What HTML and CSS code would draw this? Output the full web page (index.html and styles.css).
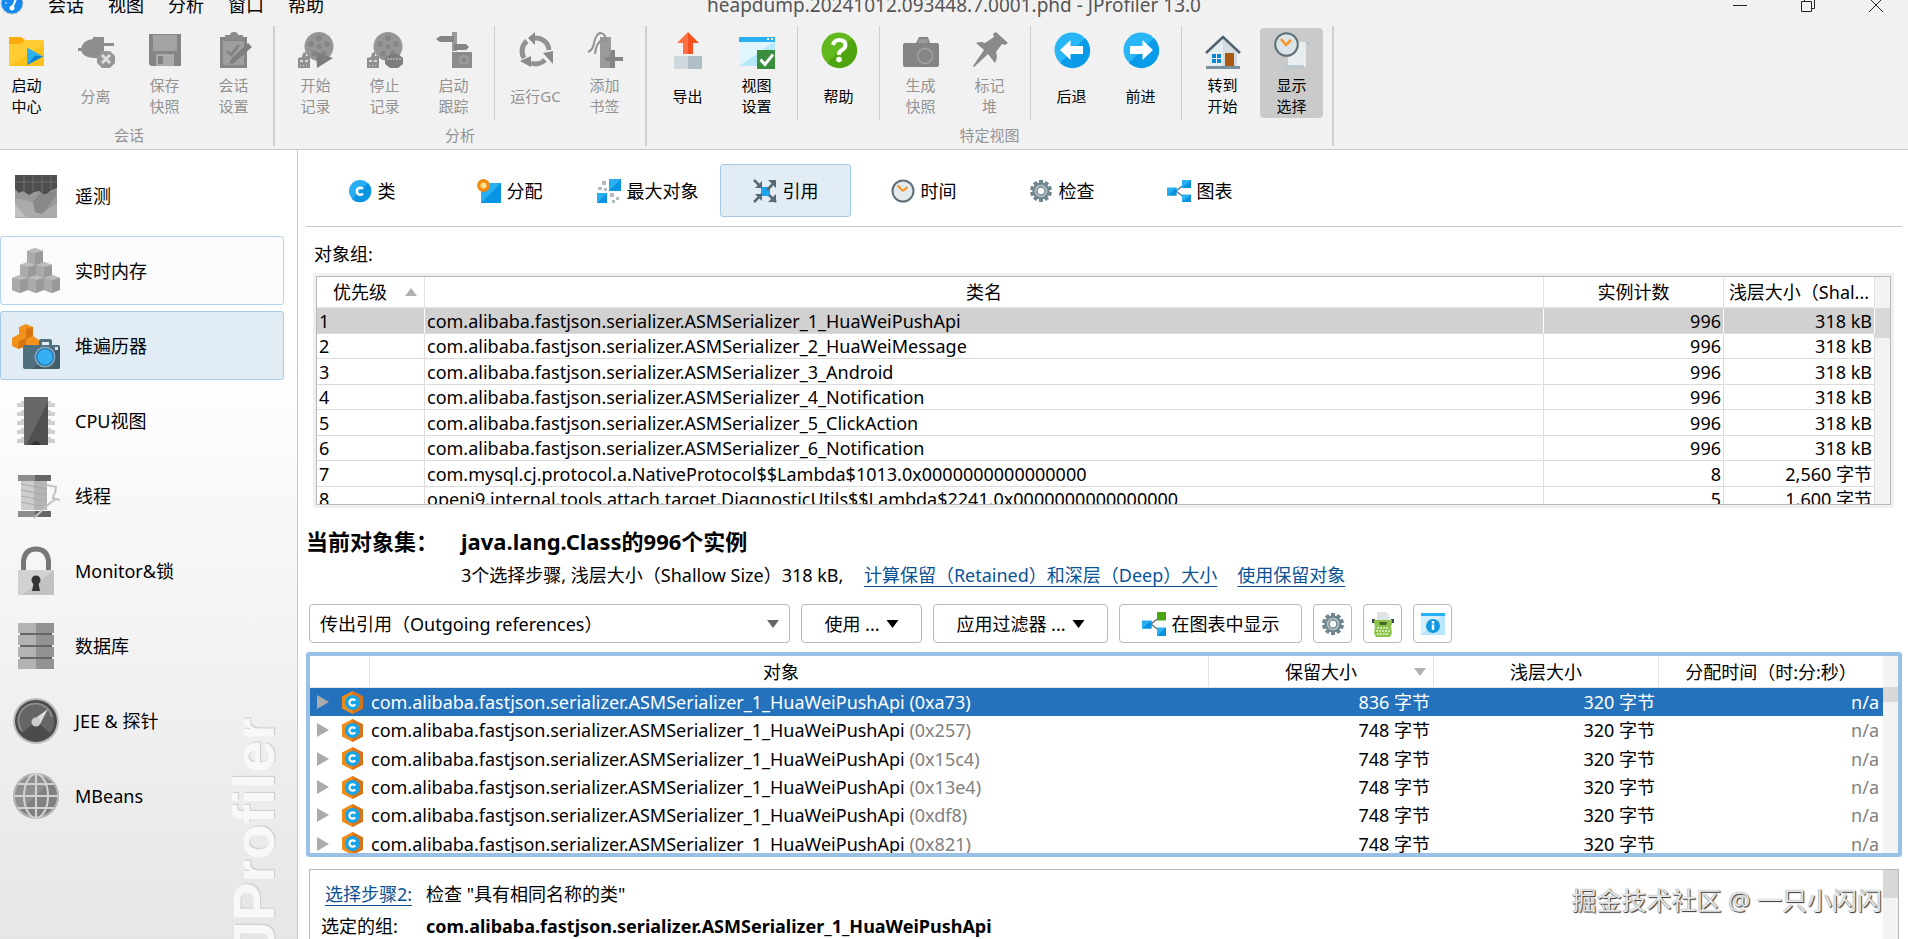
FILE: index.html
```html
<!DOCTYPE html>
<html lang="zh-CN">
<head>
<meta charset="utf-8">
<title>heapdump.20241012.093448.7.0001.phd - JProfiler 13.0</title>
<link rel="stylesheet" href="styles.css">
</head>
<body>
<svg class="sprite" aria-hidden="true">
  <symbol id="i-clock" viewBox="0 0 24 24"><circle cx="12" cy="12" r="10.5" fill="#e4eaec" stroke="#5f7078" stroke-width="2"/><path d="M12 12L6.500 6.500M12 12L16.500 8" stroke="#f7931e" stroke-width="2" fill="none"/></symbol>
  <symbol id="i-gear" viewBox="0 0 24 24"><g fill="#6f858f"><rect x="10" y="1" width="4" height="22"/><rect x="10" y="1" width="4" height="22" transform="rotate(36 12 12)"/><rect x="10" y="1" width="4" height="22" transform="rotate(72 12 12)"/><rect x="10" y="1" width="4" height="22" transform="rotate(108 12 12)"/><rect x="10" y="1" width="4" height="22" transform="rotate(144 12 12)"/><circle cx="12" cy="12" r="8.500"/></g><circle cx="12" cy="12" r="6.500" fill="#a9b9c0"/><circle cx="12" cy="12" r="3.800" fill="#fff" stroke="#6f858f" stroke-width="1.200"/></symbol>
  <symbol id="i-graph" viewBox="0 0 24 24"><path d="M18 5L9 12l9 7" fill="none" stroke="#66777f" stroke-width="1.500"/><path d="M0 8.500h9.500v8H0zM15 1h9v8h-9zM15 15.500h9v7.500h-9z" fill="#29b0f2"/><path d="M9.500 8.500v8H0zM24 1v8h-9zM24 15.500V23h-9z" fill="#0a92df"/></symbol>
  <symbol id="i-graphgreen" viewBox="0 0 24 24"><path d="M18 5L9 12l9 7" fill="none" stroke="#66777f" stroke-width="1.500"/><path d="M0 8.500h9.500v8H0zM15 15.500h9V24h-9z" fill="#29b0f2"/><path d="M9.500 8.500v8H0zM24 15.500V24h-9z" fill="#0a92df"/><path d="M15 0h9v8.500h-9z" fill="#4aa512"/></symbol>
  <symbol id="i-class" viewBox="0 0 21 23"><path d="M10.500 0L21 5.500v12L10.500 23 0 17.500v-12z" fill="#f28a16"/><path d="M10.500 0L21 5.500v12L10.500 23z" fill="#d9731a"/><circle cx="10.500" cy="11.500" r="7.600" fill="#16a4e8"/><path d="M13.200 9.600a3.200 3.200 0 1 0 0 3.800" fill="none" stroke="#fff" stroke-width="2.200"/></symbol>
  <symbol id="i-reel" viewBox="0 0 36 36"><circle cx="21" cy="14.500" r="14.500" fill="#969696"/><g fill="#868686"><circle cx="21" cy="6" r="3"/><circle cx="29" cy="12" r="3"/><circle cx="26" cy="21.500" r="3"/><circle cx="16" cy="21.500" r="3"/><circle cx="13" cy="12" r="3"/><circle cx="21" cy="14.500" r="2.500"/></g><path d="M0 26l4-1 1-4 3-1v4h4v12H0z" fill="#909090"/><path d="M2 28h3v2H2zM7 28h3v2H7zM2 33h1v1H2zM5 33h1v1H5zM8 33h1v1H8z" fill="#d8d8d8"/></symbol>
</svg>

<div class="app">
  <header class="titlebar">
    <svg class="logo" viewBox="0 0 24 24"><circle cx="12" cy="12" r="11" fill="#1689ee" stroke="#b9c6cf"/><path d="M12 17L17 6" stroke="#fff" stroke-width="2"/><circle cx="12" cy="17" r="2.500" fill="#fff"/><path d="M5 12h2M7 7l1 1M12 4v2" stroke="#fff"/></svg>
    <nav class="menus">
      <button class="menu">会话</button><button class="menu">视图</button><button class="menu">分析</button><button class="menu">窗口</button><button class="menu">帮助</button>
    </nav>
    <h1 class="doc-title">heapdump.20241012.093448.7.0001.phd - JProfiler 13.0</h1>
    <div class="wincontrols">
      <button class="wc" aria-label="最小化"><svg viewBox="0 0 16 16"><path d="M1 8.500h14"/></svg></button>
      <button class="wc" aria-label="还原"><svg viewBox="0 0 16 16"><path d="M1.500 4.500h10v10h-10zM4.500 4V1.500h10v10H12"/></svg></button>
      <button class="wc" aria-label="关闭"><svg viewBox="0 0 16 16"><path d="M1 1l14 14M15 1L1 15"/></svg></button>
    </div>
  </header>

  <div class="toolbar">
    <section class="group group-first">
      <div class="subs"><div class="sub">
        <button class="tool"><svg viewBox="0 0 36 36"><path d="M0 6q0-1 1-1h11l4 3h18q1 0 1 1v25H0z" fill="#ffcd33"/><path d="M0 6q0-1 1-1h11l4 3-4 4H0z" fill="#ffad0c"/><path d="M35 12v22H0z" fill="#fbc21d"/><path d="M18 15.500L34 24.500 18 33z" fill="#2cb1f0"/><path d="M18 33l16-8.500-8-1z" fill="#0b84cf"/></svg><span>启动<br>中心</span></button>
        <button class="tool" disabled><svg viewBox="0 0 36 36"><path d="M0 16h3q2-8 12-9V5h11v6h10v3H26v13l-10-1q-10 0-13-7H0z" fill="#8d8d8d"/><path d="M24 19h8l5 5v7l-5 5h-8l-5-5v-7z" fill="#969696"/><path d="M24 23l8 8M32 23l-8 8" stroke="#ddd" stroke-width="3"/></svg><span>分离</span></button>
        <button class="tool" disabled><svg viewBox="0 0 36 36"><path d="M2 2h32v32H4l-2-2z" fill="#858585"/><path d="M6 3h24v16H6z" fill="#a3a3a3"/><path d="M9 22h18v12H9z" fill="#ababab"/><path d="M11 24h5v8h-5z" fill="#828282"/></svg><span>保存<br>快照</span></button>
        <button class="tool" disabled><svg viewBox="0 0 36 36"><path d="M4 5h27v31H4z" fill="#858585"/><path d="M7 9h21v24H7z" fill="#9f9f9f"/><path d="M9 3h5q0-3 4-3t4 3h5v5H9z" fill="#8b8b8b"/><path d="M11 19l4 4 8-10" stroke="#858585" stroke-width="3" fill="none"/><path d="M32 11l4 4-18 16-5 1 2-5z" fill="#808080"/></svg><span>会话<br>设置</span></button>
      </div></div>
      <h2 class="group-title">会话</h2>
    </section>
    <section class="group">
      <div class="subs">
        <div class="sub">
          <button class="tool" disabled><svg viewBox="0 0 36 36"><use href="#i-reel"/><path d="M18 20l17 6-16 10z" fill="#7d7d7d"/></svg><span>开始<br>记录</span></button>
          <button class="tool" disabled><svg viewBox="0 0 36 36"><use href="#i-reel"/><path d="M23 22h8l5 4v6l-5 4h-8l-5-4v-6z" fill="#7d7d7d"/><path d="M20 27h14" stroke="#aaa" stroke-width="2" stroke-dasharray="2 1"/></svg><span>停止<br>记录</span></button>
          <button class="tool" disabled><svg viewBox="0 0 36 36"><path d="M16 0h5v19h-5z" fill="#9a9a9a"/><path d="M4 4h14v6H4L0 7zM18 12h12l3 3-3 3H18z" fill="#858585"/><path d="M16 20h20v16H16z" fill="#8b8b8b"/><circle cx="28" cy="28" r="4" fill="none" stroke="#9f9f9f" stroke-width="2"/></svg><span>启动<br>跟踪</span></button>
        </div>
        <div class="sub">
          <button class="tool" disabled><svg viewBox="0 0 36 36"><g fill="none" stroke="#929292" stroke-width="5"><path d="M15 6.500A13 13 0 0 1 31 18"/><path d="M27 28A13 13 0 0 1 13 31"/><path d="M6 26A13 13 0 0 1 9 9"/></g><path d="M17 0v13L10 6zM25 21l10-2v13zM2 29l11-5v11z" fill="#8a8a8a"/></svg><span>运行GC</span></button>
          <button class="tool" disabled><svg viewBox="0 0 36 36"><path d="M13 5h11v31H13z" fill="#9a9a9a"/><path d="M24 18h4v7h8v4h-8v7h-5v-7h-5v-4h5z" fill="#858585"/><path d="M19 10q0-9-6-9Q9 2 7 11q-1 7-6 9M15 8q-6 3-7 14" fill="none" stroke="#929292" stroke-width="2"/></svg><span>添加<br>书签</span></button>
        </div>
      </div>
      <h2 class="group-title">分析</h2>
    </section>
    <section class="group">
      <div class="subs">
        <div class="sub">
          <button class="tool"><svg viewBox="0 0 36 36"><path d="M18 0L7 11h6v11h5z" fill="#ff7043"/><path d="M18 0l11 11h-6v11h-5z" fill="#f4511e"/><path d="M4 24h14v13H4z" fill="#cfd8dc"/><path d="M18 24h14v13H18z" fill="#b0bec5"/></svg><span>导出</span></button>
          <button class="tool"><svg viewBox="0 0 36 36"><path d="M0 5h36v29H0z" fill="#b6e8fb"/><path d="M0 9h36L0 34z" fill="#e1f5fe"/><path d="M0 5h36v5H0z" fill="#29b0f2"/><path d="M28 7h2M32 7h2" stroke="#fff" stroke-width="2"/><path d="M18 18h18v19H18z" fill="#388e3c"/><path d="M21.500 27.500l4.500 5 8-10" fill="none" stroke="#fff" stroke-width="3"/></svg><span>视图<br>设置</span></button>
        </div>
        <div class="sub">
          <button class="tool"><svg viewBox="0 0 36 36"><circle cx="18" cy="18" r="17.500" fill="#62b91d"/><path d="M31 6A17.500 17.500 0 0 1 6 31z" fill="#4fa50f"/><path d="M12 13q1-5 6.500-5t6 5q0 3-3.500 5t-3 5" fill="none" stroke="#fff" stroke-width="4"/><circle cx="18" cy="27.500" r="2.800" fill="#fff"/></svg><span>帮助</span></button>
        </div>
        <div class="sub">
          <button class="tool" disabled><svg viewBox="0 0 36 36"><path d="M2 11h11l3-6h9l2 6h7q2 0 2 2v20q0 2-2 2H2q-2 0-2-2V13q0-2 2-2z" fill="#858585"/><path d="M16 7h8l1 4H15z" fill="#9a9a9a"/><circle cx="22" cy="24" r="8.500" fill="#9c9c9c"/><circle cx="22" cy="24" r="6.500" fill="#868686"/></svg><span>生成<br>快照</span></button>
          <button class="tool" disabled><svg viewBox="0 0 36 36"><path d="M24 0l12 11-3 2-3-1-6 8q2 6-1 11l-7-9L2 35l-1-1 11-16-8-7q5-2 9 0l9-6-1-3z" fill="#8a8a8a"/></svg><span>标记<br>堆</span></button>
        </div>
        <div class="sub">
          <button class="tool"><svg viewBox="0 0 36 36"><circle cx="18" cy="18" r="17.500" fill="#29b6f6"/><path d="M31 6A17.500 17.500 0 0 1 6 31z" fill="#0a9be8"/><path d="M6 18L16.500 8v6H29v8H16.500v6z" fill="#fff"/></svg><span>后退</span></button>
          <button class="tool"><svg viewBox="0 0 36 36"><circle cx="18" cy="18" r="17.500" fill="#29b6f6"/><path d="M31 6A17.500 17.500 0 0 1 6 31z" fill="#0a9be8"/><path d="M30 18L19.500 8v6H7v8h12.500v6z" fill="#fff"/></svg><span>前进</span></button>
        </div>
        <div class="sub">
          <button class="tool"><svg viewBox="0 0 36 36"><path d="M4 20L18 7l14 13v14H4z" fill="#e6edf0"/><path d="M18 7l14 13v14H18z" fill="#d3dde1"/><path d="M1 34h34v3H1z" fill="#78909c"/><path d="M1 21L18 5l17 16" fill="none" stroke="#51646e" stroke-width="2.500"/><path d="M7 22h4v4H7zM12 22h4v4h-4zM7 27h4v4H7zM12 27h4v4h-4z" fill="#0a86d2"/><path d="M20 21h9v13h-9z" fill="#a85a12"/></svg><span>转到<br>开始</span></button>
          <button class="tool tool-on" aria-pressed="true"><svg viewBox="0 0 36 36"><path d="M14 10h18v26l-4-2H14z" fill="#e8eef0"/><path d="M32 10h4v2h-4z" fill="#b4c0c5"/><path d="M9 33h20l3 4H10z" fill="#bcc8cd"/><circle cx="12.500" cy="12.500" r="11.300" fill="#dce4e7" stroke="#5f7078" stroke-width="2"/><path d="M7 7l5 6 5-5" fill="none" stroke="#f7931e" stroke-width="2.500"/></svg><span>显示<br>选择</span></button>
        </div>
      </div>
      <h2 class="group-title">特定视图</h2>
    </section>
  </div>

  <div class="body">
    <nav class="sidebar">
      <a class="side" href="#"><svg viewBox="0 0 48 48"><path d="M3 3h42v43H3z" fill="#999"/><path d="M3 26l18 4 14 8 10-7v15H3z" fill="#aaa"/><path d="M3 3h42v13l-7 3-5 5-6-5-5 1-5 3-6-4-4 2-4-4z" fill="#4e4e4e"/><path d="M3 10h42M12 3v16M21 3v16M30 3v18M39 3v15" stroke="#6e6e6e"/><path d="M21 29l7-7 6 0 10-4v6l-6 6-2 6-6 6-7-2z" fill="#888"/><path d="M3 32l11 13H3z" fill="#c2c2c2"/></svg>遥测</a>
      <a class="side side-hover" href="#"><svg viewBox="0 0 48 48"><defs><g id="cube"><path d="M0 3l8-3 8 3v12l-8 3-8-3z" fill="#999"/><path d="M0 3l8 2v13l-8-3z" fill="#aaa"/><path d="M0 3l8-3 8 3-8 2z" fill="#bcbcbc"/></g></defs><use href="#cube" x="15" y="1"/><use href="#cube" x="8" y="15"/><use href="#cube" x="24" y="15"/><use href="#cube" x="0" y="28"/><use href="#cube" x="16" y="28"/><use href="#cube" x="32" y="28"/></svg>实时内存</a>
      <a class="side side-on" href="#"><svg viewBox="0 0 48 48"><path d="M7 5l7-3 7 3v9l6 4v6l-7 3-6-3-8 3-6-3v-8l7-4z" fill="#f2921d"/><path d="M14 7l7-2v9l-7 3zM7 19l7-3v8l-8 3z" fill="#d9730e"/><path d="M13 23h14v-4q0-2 2-2h9q2 0 2 2v4h6q2 0 2 2v20q0 2-2 2H13q-2 0-2-2V25q0-2 2-2z" fill="#50707f"/><path d="M48 25v20q0 2-2 2H20z" fill="#415d6b"/><path d="M30 20h7v3h-7z" fill="#e3edf5"/><path d="M43 25h3v3h-3z" fill="#dbe7ee"/><circle cx="33" cy="35" r="10.500" fill="#8aa5b1"/><circle cx="33" cy="35" r="9" fill="#1f7fc0"/><circle cx="33" cy="35" r="7.500" fill="#35b0f3"/></svg>堆遍历器</a>
      <a class="side" href="#"><svg viewBox="0 0 48 48"><path d="M5 6h4v-2h30v2h4v4H5zM5 15h4v-2h30v2h4v4H5zM5 24h4v-2h30v2h4v4H5zM5 33h4v-2h30v2h4v4H5zM5 42h4v-2h30v2h4v4H5z" fill="#cfcfcf"/><path d="M12 0h24v48H12z" fill="#505050"/><path d="M12 0h24v5L14 48h-2z" fill="#686868"/><path d="M19 48q5-8 10 0z" fill="#333"/></svg>CPU视图</a>
      <a class="side" href="#"><svg viewBox="0 0 48 48"><path d="M9 8h26v30H9z" fill="#cdcdcd"/><path d="M22 8h13v30H22z" fill="#b5b5b5"/><path d="M9 12l26 5M9 18l26 5M9 24l26 5M9 30l20 4" stroke="#a9a9a9"/><path d="M6 3h17v6H6zM6 39h17v6H6z" fill="#8d8d8d"/><path d="M23 3h16v6H23zM23 39h16v6H23z" fill="#666"/><path d="M35 13l9 2-1 6q-4 5 1 6l-6 4L22 46M40 26l8 2" fill="none" stroke="#c2c2c2" stroke-width="2"/></svg>线程</a>
      <a class="side" href="#"><svg viewBox="0 0 48 48"><path d="M11.500 24V14Q13 2 24 2t12.500 12v10" fill="none" stroke="#777" stroke-width="5"/><path d="M6 23h36v25H6z" fill="#d2d2d2"/><path d="M42 23v25H10z" fill="#c2c2c2"/><circle cx="24" cy="33" r="4.500" fill="#333"/><path d="M22 34h4l2 10h-8z" fill="#333"/></svg>Monitor&amp;锁</a>
      <a class="side" href="#"><svg viewBox="0 0 48 48"><path d="M8 4h32v40H8z" fill="#666"/><path d="M6 1h18v10H6zM6 13h18v10H6zM6 25h18v10H6zM6 37h18v10H6z" fill="#b3b3b3"/><path d="M24 1h18v10H24zM24 13h18v10H24zM24 25h18v10H24zM24 37h18v10H24z" fill="#929292"/></svg>数据库</a>
      <a class="side" href="#"><svg viewBox="0 0 48 48"><circle cx="24" cy="24" r="22" fill="#4b4b4b" stroke="#bcbcbc" stroke-width="2"/><path d="M10 36A18 18 0 1 1 38 36L24 24z" fill="#666"/><path d="M10 34A17 17 0 1 1 40 20" fill="none" stroke="#8b8b8b" stroke-width="2"/><path d="M21 23L36 12 28 27z" fill="#ddd"/><circle cx="24" cy="25" r="4.500" fill="#ccc"/></svg>JEE &amp; 探针</a>
      <a class="side" href="#"><svg viewBox="0 0 48 48"><circle cx="24" cy="24" r="22" fill="#808080"/><path d="M8 39L40 8A22 22 0 0 0 8 39z" fill="#8f8f8f"/><g fill="none" stroke="#d2d2d2" stroke-width="2"><circle cx="24" cy="24" r="22" stroke="#b3b3b3"/><ellipse cx="24" cy="24" rx="12" ry="22"/><path d="M24 2v44M2 24h44M6 12h36M6 36h36"/></g></svg>MBeans</a>
      <div class="brand" aria-hidden="true">JProfiler</div>
    </nav>

    <main class="main">
      <nav class="tabs">
        <button class="tab"><svg viewBox="0 0 24 24"><circle cx="12" cy="12" r="11" fill="#27aef2"/><path d="M20 4A11 11 0 0 1 4 20z" fill="#0994e2"/><path d="M15 10a3.500 3.500 0 1 0 0 4.500" fill="none" stroke="#fff" stroke-width="2.500"/></svg>类</button>
        <button class="tab"><svg viewBox="0 0 24 24"><path d="M4 4h20v20H4z" fill="#29aef1"/><path d="M24 4v20H4z" fill="#0795e3"/><circle cx="6.500" cy="6.500" r="6.500" fill="#f28a13"/><circle cx="6.500" cy="6.500" r="3" fill="#ffdf91"/></svg>分配</button>
        <button class="tab"><svg viewBox="0 0 24 24"><path d="M12 0h12v12H12zM0 14h10v10H0z" fill="#29aef1"/><path d="M24 0v12H12zM10 14v10H0z" fill="#0795e3"/><path d="M5 2h4v4H5zM1 8h4v3H1zM7 9h3v3H7zM13 14h4v4h-4zM19 18h3v3h-3zM15 21h3v3h-3z" fill="#b0bcc1"/></svg>最大对象</button>
        <button class="tab tab-on" aria-pressed="true"><svg viewBox="0 0 24 24"><path d="M8 8h9v9H8z" fill="#1fa3ec"/><path d="M1 1l6 6M14 11l8-8M23 23l-7-7M1 23l8-8" stroke="#566b76" stroke-width="2.500"/><path d="M9 2v7H2zM15 1h8v8zM15 23h8v-8zM2 15h7v7z" fill="#566b76"/></svg>引用</button>
        <button class="tab"><svg viewBox="0 0 24 24"><use href="#i-clock"/></svg>时间</button>
        <button class="tab"><svg viewBox="0 0 24 24"><use href="#i-gear"/></svg>检查</button>
        <button class="tab"><svg viewBox="0 0 24 24"><use href="#i-graph"/></svg>图表</button>
      </nav>

      <h2 class="label">对象组:</h2>
      <div class="pane pane-groups">
        <div class="scroll">
          <table class="grid">
            <colgroup><col class="c-rank"><col><col class="c-count"><col class="c-size"></colgroup>
            <thead><tr><th><span class="sorted">优先级 <svg class="tri" viewBox="0 0 12 8"><path d="M0 8L6 0l6 8z"/></svg></span></th><th>类名</th><th>实例计数</th><th>浅层大小（Shal...</th></tr></thead>
            <tbody>
              <tr class="sel"><td>1</td><td>com.alibaba.fastjson.serializer.ASMSerializer_1_HuaWeiPushApi</td><td>996</td><td>318 kB</td></tr>
              <tr><td>2</td><td>com.alibaba.fastjson.serializer.ASMSerializer_2_HuaWeiMessage</td><td>996</td><td>318 kB</td></tr>
              <tr><td>3</td><td>com.alibaba.fastjson.serializer.ASMSerializer_3_Android</td><td>996</td><td>318 kB</td></tr>
              <tr><td>4</td><td>com.alibaba.fastjson.serializer.ASMSerializer_4_Notification</td><td>996</td><td>318 kB</td></tr>
              <tr><td>5</td><td>com.alibaba.fastjson.serializer.ASMSerializer_5_ClickAction</td><td>996</td><td>318 kB</td></tr>
              <tr><td>6</td><td>com.alibaba.fastjson.serializer.ASMSerializer_6_Notification</td><td>996</td><td>318 kB</td></tr>
              <tr><td>7</td><td>com.mysql.cj.protocol.a.NativeProtocol$$Lambda$1013.0x0000000000000000</td><td>8</td><td>2,560 字节</td></tr>
              <tr><td>8</td><td>openj9.internal.tools.attach.target.DiagnosticUtils$$Lambda$2241.0x0000000000000000</td><td>5</td><td>1,600 字节</td></tr>
            </tbody>
          </table>
        </div>
        <div class="bar"><div class="thumb"></div></div>
      </div>

      <div class="current">
        <h2>当前对象集：</h2>
        <h2>java.lang.Class的996个实例</h2>
        <p>3个选择步骤, 浅层大小（Shallow Size）318 kB, <a class="link link-calc" href="#">计算保留（Retained）和深层（Deep）大小</a><a class="link" href="#">使用保留对象</a></p>
      </div>

      <div class="actions">
        <div class="picker">
          <select aria-label="引用类型"><option>传出引用（Outgoing references）</option></select>
          <svg class="tri" viewBox="0 0 12 8"><path d="M0 0h12L6 8z"/></svg>
        </div>
        <button class="btn btn-use">使用 ... <svg class="tri" viewBox="0 0 12 8"><path d="M0 0h12L6 8z"/></svg></button>
        <button class="btn btn-filter">应用过滤器 ... <svg class="tri" viewBox="0 0 12 8"><path d="M0 0h12L6 8z"/></svg></button>
        <button class="btn btn-graph"><svg class="ic" viewBox="0 0 24 24"><use href="#i-graphgreen"/></svg>在图表中显示</button>
        <button class="btn btn-icon" aria-label="设置"><svg class="ic" viewBox="0 0 24 24"><use href="#i-gear"/></svg></button>
        <button class="btn btn-icon" aria-label="脚本"><svg class="ic" viewBox="0 0 24 24"><path d="M6 0h9l3 3v7H6z" fill="#dde3e6"/><path d="M1 7h3v4H1zM20 7h3v4h-3z" fill="#37474f"/><path d="M3 8h18v4l-1 2 1 7-2 4H5l-2-4 1-7-1-2z" fill="#8bc34a"/><path d="M8 10h8l-1 3H9z" fill="#43632a"/><path d="M6 16h12M5 19h14M6 22h12" stroke="#e6f3d4" stroke-width="1.500" stroke-dasharray="2 1"/></svg></button>
        <button class="btn btn-icon" aria-label="信息"><svg class="ic" viewBox="0 0 24 24"><path d="M0 1h24v22H0z" fill="#b9e6fa"/><path d="M0 1h24L0 23z" fill="#d5f0fc"/><path d="M0 1h24v3H0z" fill="#29b0f2"/><circle cx="12" cy="14" r="7" fill="#1399e2"/><path d="M12 9v2.500M12 12.500V18" stroke="#fff" stroke-width="2.500"/></svg></button>
      </div>

      <div class="pane pane-objects">
        <div class="scroll">
          <table class="tree">
            <colgroup><col class="c-node"><col><col class="c-ret"><col class="c-ret"><col class="c-time"></colgroup>
            <thead><tr><th></th><th class="th-object">对象</th><th><span class="sorted">保留大小 <svg class="tri" viewBox="0 0 12 8"><path d="M0 0h12L6 8z"/></svg></span></th><th>浅层大小</th><th>分配时间（时:分:秒）</th></tr></thead>
            <tbody>
              <tr class="sel"><td><div class="node"><svg class="exp" viewBox="0 0 12 14"><path d="M0 0l12 7-12 7z"/></svg><svg class="cls" viewBox="0 0 21 23"><use href="#i-class"/></svg></div></td><td>com.alibaba.fastjson.serializer.ASMSerializer_1_HuaWeiPushApi <span>(0xa73)</span></td><td>836 字节</td><td>320 字节</td><td>n/a</td></tr>
              <tr><td><div class="node"><svg class="exp" viewBox="0 0 12 14"><path d="M0 0l12 7-12 7z"/></svg><svg class="cls" viewBox="0 0 21 23"><use href="#i-class"/></svg></div></td><td>com.alibaba.fastjson.serializer.ASMSerializer_1_HuaWeiPushApi <span>(0x257)</span></td><td>748 字节</td><td>320 字节</td><td>n/a</td></tr>
              <tr><td><div class="node"><svg class="exp" viewBox="0 0 12 14"><path d="M0 0l12 7-12 7z"/></svg><svg class="cls" viewBox="0 0 21 23"><use href="#i-class"/></svg></div></td><td>com.alibaba.fastjson.serializer.ASMSerializer_1_HuaWeiPushApi <span>(0x15c4)</span></td><td>748 字节</td><td>320 字节</td><td>n/a</td></tr>
              <tr><td><div class="node"><svg class="exp" viewBox="0 0 12 14"><path d="M0 0l12 7-12 7z"/></svg><svg class="cls" viewBox="0 0 21 23"><use href="#i-class"/></svg></div></td><td>com.alibaba.fastjson.serializer.ASMSerializer_1_HuaWeiPushApi <span>(0x13e4)</span></td><td>748 字节</td><td>320 字节</td><td>n/a</td></tr>
              <tr><td><div class="node"><svg class="exp" viewBox="0 0 12 14"><path d="M0 0l12 7-12 7z"/></svg><svg class="cls" viewBox="0 0 21 23"><use href="#i-class"/></svg></div></td><td>com.alibaba.fastjson.serializer.ASMSerializer_1_HuaWeiPushApi <span>(0xdf8)</span></td><td>748 字节</td><td>320 字节</td><td>n/a</td></tr>
              <tr><td><div class="node"><svg class="exp" viewBox="0 0 12 14"><path d="M0 0l12 7-12 7z"/></svg><svg class="cls" viewBox="0 0 21 23"><use href="#i-class"/></svg></div></td><td>com.alibaba.fastjson.serializer.ASMSerializer_1_HuaWeiPushApi <span>(0x821)</span></td><td>748 字节</td><td>320 字节</td><td>n/a</td></tr>
            </tbody>
          </table>
        </div>
        <div class="bar"><div class="thumb"></div></div>
      </div>

      <div class="pane pane-steps">
        <dl class="scroll steps">
          <dt class="step"><a class="link" href="#">选择步骤2:</a></dt><dd>检查 "具有相同名称的类"</dd>
          <dt>选定的组:</dt><dd><b>com.alibaba.fastjson.serializer.ASMSerializer_1_HuaWeiPushApi</b></dd>
        </dl>
        <div class="bar"><div class="thumb"></div></div>
      </div>
      <div class="watermark">掘金技术社区 @ 一只小闪闪</div>
    </main>
  </div>
</div>
</body>
</html>
```
FILE: styles.css
```css
* { box-sizing: border-box; }
body {
  margin: 0;
  background: #f1f1f1;
  color: #000;
  font: 18px/24px "Noto Sans", "Noto Sans CJK SC", sans-serif;
  overflow: hidden;
}
h1, h2, p, dl, dd { margin: 0; font-size: inherit; font-weight: inherit; }
button { border: 0; padding: 0; background: none; color: inherit; font: inherit; }
svg { display: block; flex: none; overflow: visible; }
.sprite { position: absolute; width: 0; height: 0; }
.app { display: flex; flex-direction: column; height: 100vh; }

/* Title bar */
.titlebar { display: grid; grid-template: 10px / 1fr auto 1fr; align-items: center; height: 10px; position: relative; }
.logo { position: absolute; left: 0; top: -9px; width: 24px; height: 24px; }
.menus { display: flex; gap: 24px; padding-left: 48px; }
.doc-title { color: #555; font-size: 19px; white-space: nowrap; }
.wincontrols { display: flex; justify-content: flex-end; gap: 52px; padding-right: 24px; }
.wc svg { width: 16px; height: 16px; fill: none; stroke: #222; }

/* Toolbar */
.toolbar { display: flex; padding-top: 16px; height: 140px; border-bottom: 1px solid #c8c8c8; font-size: 15px; line-height: 21px; }
.group { border-right: 2px solid #cfcfcf; height: 120px; }
.group-first { margin-left: -8px; }
.group-first .sub { padding-left: 0; padding-right: 5px; }
.group-first .group-title { padding-right: 7px; }
.subs { display: flex; height: 94px; }
.sub { display: flex; padding: 0 6px; border-right: 1px solid #cfcfcf; }
.sub:last-child { border-right: 0; }
.tool { display: flex; flex-direction: column; align-items: center; width: 63px; height: 90px; margin: 2px 3px; padding-top: 4px; border-radius: 4px; }
.tool svg { width: 36px; height: 36px; }
.tool span { display: grid; place-content: center; height: 42px; margin-top: 7px; white-space: nowrap; }
.tool:disabled { color: #939393; }
.tool-on { background: #cacaca; }
.group-title { text-align: center; color: #939393; line-height: 30px; }

/* Sidebar */
.body { display: flex; flex: 1; min-height: 0; }
.sidebar { position: relative; width: 298px; flex: none; display: flex; flex-direction: column; gap: 6px; padding: 11px 13px 0 0; overflow: hidden; border-right: 1px solid #c8c8c8; background: linear-gradient(#fff 25%, #e6e6e6); }
.side { display: flex; flex: none; align-items: center; gap: 15px; height: 69px; padding-left: 11px; border: 1px solid transparent; border-radius: 3px; color: #000; text-decoration: none; }
.side svg { width: 48px; height: 48px; }
.side-hover { background: #f9fbfd; border-color: #b5d3ea; }
.side-on { background: #e2ecf5; border-color: #a5cae6; }
.brand { position: absolute; right: 10px; top: 568px; writing-mode: vertical-rl; transform: rotate(180deg); font: bold 58px/66px "Liberation Sans", sans-serif; color: #f8f8f8; text-shadow: 1px 1px 1px #ccc; }

/* Main column */
.main { position: relative; flex: 1; min-width: 0; display: flex; flex-direction: column; padding: 14px 6px 0 8px; background: #fff; }
.tabs { display: flex; gap: 7px; padding: 0 0 9px; border-bottom: 1px solid #c8c8c8; }
.tab { display: flex; align-items: center; justify-content: center; gap: 6px; width: 131px; height: 53px; border: 1px solid transparent; border-radius: 3px; }
.tab svg { width: 24px; height: 24px; }
.tab-on { background: #e2ecf5; border-color: #a5cae6; }
.label { padding: 15px 8px 10px; }

.pane { display: flex; overflow: hidden; background: #fff; }
.scroll { flex: 1; min-width: 0; overflow: hidden; }
.bar { width: 15px; flex: none; background: #f3f3f3; }
.thumb { background: #d8d8d8; height: 30px; margin-top: 31px; }
table { width: 100%; table-layout: fixed; border-collapse: separate; border-spacing: 0; white-space: nowrap; }
th, td { padding: 0 2px; font-weight: inherit; text-align: left; overflow: hidden; }
th { text-align: center; }
.sorted { display: flex; align-items: center; justify-content: flex-end; gap: 18px; padding-right: 5px; }
.tri { width: 12px; height: 8px; fill: #b0b0b0; }

.pane-groups { height: 229px; margin: 0 11px 0 10px; border: 1px solid #b9b9b9; outline: 3px solid #f0f0f0; }
.c-rank { width: 108px; }
.c-count { width: 180px; }
.c-size { width: 151px; }
.grid th { height: 31px; border-right: 1px solid #e4e4e4; border-bottom: 1px solid #e4e4e4; }
.grid td { height: 25px; line-height: 24px; border-right: 1px solid #dcdcdc; border-bottom: 1px solid #dcdcdc; }
.grid tbody tr:nth-child(odd) td { height: 26px; }
.grid td:nth-child(n+3) { text-align: right; }
.grid .sel td { background: #d1d1d1; border-right-color: #fff; }

.current { display: grid; grid-template-columns: 155px 1fr; row-gap: 5px; padding: 20px 0 16px; white-space: nowrap; }
.current h2 { font-size: 22px; line-height: 32px; font-weight: bold; }
.current p { grid-column: 2; line-height: 26px; }
.link { color: #0a5296; text-decoration: underline; text-underline-offset: 4px; text-decoration-thickness: 1px; }
.link-calc { margin: 0 20px 0 16px; }

.actions { display: flex; gap: 11px; padding: 0 3px 9px; }
.picker { position: relative; width: 481px; }
.picker select { appearance: none; width: 100%; height: 39px; padding: 0 10px; border: 1px solid #b9b9b9; border-radius: 4px; background: #fff; color: #000; font: inherit; }
.picker .tri { position: absolute; right: 10px; top: 16px; width: 14px; fill: #666; }
.btn { display: flex; align-items: center; justify-content: center; gap: 6px; height: 39px; border: 1px solid #b9b9b9; border-radius: 4px; background: #fff; white-space: nowrap; }
.btn .tri { fill: #000; width: 13px; }
.ic { width: 24px; height: 24px; }
.btn-use { width: 121px; }
.btn-filter { width: 175px; }
.btn-graph { width: 183px; }
.btn-icon { width: 39px; }

.pane-objects { flex: none; height: 205px; border: 4px solid #99c1e8; border-radius: 3px; }
.c-node { width: 60px; }
.c-ret { width: 225px; }
.c-time { width: 224px; }
.tree th { height: 32px; border-right: 1px solid #e4e4e4; border-bottom: 1px solid #e4e4e4; }
.tree th:last-child { border-right: 0; }
.tree .th-object { padding-right: 18px; }
.tree .sorted { gap: 57px; }
.tree td { height: 28px; line-height: 26px; padding: 0 4px 0 1px; }
.tree tbody tr:nth-child(3n) td { height: 29px; }
.tree td:nth-child(n+3) { text-align: right; }
.tree td span, .tree td:last-child { color: #808080; }
.tree .sel td, .tree .sel td span { background: #2472bc; color: #fff; }
.node { display: flex; align-items: center; gap: 13px; padding-left: 6px; }
.exp { width: 12px; height: 14px; fill: #ababab; }
.cls { width: 21px; height: 23px; }
.pane-objects .thumb { height: 15px; }

.pane-steps { flex: 1; min-height: 0; margin: 12px 3px 0; border: 1px solid #b9b9b9; border-bottom: 0; }
.pane-steps .thumb { margin-top: 0; height: 28px; }
.steps { display: grid; grid-template-columns: 105px 1fr; grid-auto-rows: 32px; line-height: 32px; padding: 8px 11px 0; white-space: nowrap; }
.step { padding-left: 4px; }
.watermark { position: absolute; right: 26px; bottom: 21px; font-size: 25px; line-height: 36px; color: #e6e6e6; text-shadow: 1px 1px 1px #333, 0 0 1px #777; white-space: nowrap; }
```
